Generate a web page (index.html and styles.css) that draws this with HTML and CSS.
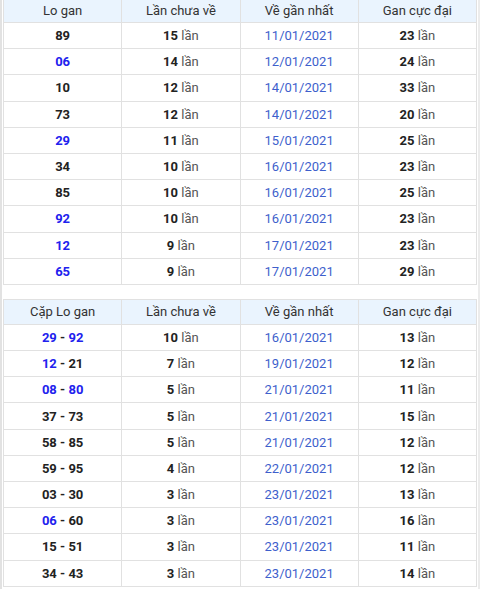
FILE: index.html
```html
<!DOCTYPE html>
<html lang="vi">
<head>
<meta charset="utf-8">
<link rel="stylesheet" href="styles.css">
</head>
<body>
<div class="frame">
  <table class="stat stat-first">
    <thead>
      <tr><th>Lo gan</th><th>Lần chưa về</th><th>Về gần nhất</th><th>Gan cực đại</th></tr>
    </thead>
    <tbody>
      <tr><td class="num">89</td><td><b>15</b> lần</td><td class="date">11/01/2021</td><td><b>23</b> lần</td></tr>
      <tr><td class="num blue">06</td><td><b>14</b> lần</td><td class="date">12/01/2021</td><td><b>24</b> lần</td></tr>
      <tr><td class="num">10</td><td><b>12</b> lần</td><td class="date">14/01/2021</td><td><b>33</b> lần</td></tr>
      <tr><td class="num">73</td><td><b>12</b> lần</td><td class="date">14/01/2021</td><td><b>20</b> lần</td></tr>
      <tr><td class="num blue">29</td><td><b>11</b> lần</td><td class="date">15/01/2021</td><td><b>25</b> lần</td></tr>
      <tr><td class="num">34</td><td><b>10</b> lần</td><td class="date">16/01/2021</td><td><b>23</b> lần</td></tr>
      <tr><td class="num">85</td><td><b>10</b> lần</td><td class="date">16/01/2021</td><td><b>25</b> lần</td></tr>
      <tr><td class="num blue">92</td><td><b>10</b> lần</td><td class="date">16/01/2021</td><td><b>23</b> lần</td></tr>
      <tr><td class="num blue">12</td><td><b>9</b> lần</td><td class="date">17/01/2021</td><td><b>23</b> lần</td></tr>
      <tr><td class="num blue">65</td><td><b>9</b> lần</td><td class="date">17/01/2021</td><td><b>29</b> lần</td></tr>
    </tbody>
  </table>
  <table class="stat">
    <thead>
      <tr><th>Cặp Lo gan</th><th>Lần chưa về</th><th>Về gần nhất</th><th>Gan cực đại</th></tr>
    </thead>
    <tbody>
      <tr><td class="num"><span class="blue">29</span> - <span class="blue">92</span></td><td><b>10</b> lần</td><td class="date">16/01/2021</td><td><b>13</b> lần</td></tr>
      <tr><td class="num"><span class="blue">12</span> - 21</td><td><b>7</b> lần</td><td class="date">19/01/2021</td><td><b>12</b> lần</td></tr>
      <tr><td class="num"><span class="blue">08</span> - <span class="blue">80</span></td><td><b>5</b> lần</td><td class="date">21/01/2021</td><td><b>11</b> lần</td></tr>
      <tr><td class="num">37 - 73</td><td><b>5</b> lần</td><td class="date">21/01/2021</td><td><b>15</b> lần</td></tr>
      <tr><td class="num">58 - 85</td><td><b>5</b> lần</td><td class="date">21/01/2021</td><td><b>12</b> lần</td></tr>
      <tr><td class="num">59 - 95</td><td><b>4</b> lần</td><td class="date">22/01/2021</td><td><b>12</b> lần</td></tr>
      <tr><td class="num">03 - 30</td><td><b>3</b> lần</td><td class="date">23/01/2021</td><td><b>13</b> lần</td></tr>
      <tr><td class="num"><span class="blue">06</span> - 60</td><td><b>3</b> lần</td><td class="date">23/01/2021</td><td><b>16</b> lần</td></tr>
      <tr><td class="num">15 - 51</td><td><b>3</b> lần</td><td class="date">23/01/2021</td><td><b>11</b> lần</td></tr>
      <tr><td class="num">34 - 43</td><td><b>3</b> lần</td><td class="date">23/01/2021</td><td><b>14</b> lần</td></tr>
    </tbody>
  </table>
</div>
</body>
</html>
```
FILE: styles.css
```css
html, body {
  margin: 0;
  padding: 0;
  background: #fff;
}
body {
  font-family: Roboto, "Liberation Sans", Arial, sans-serif;
  font-size: 13px;
  color: #555;
  overflow: hidden;
}
.frame {
  width: 474px;
  margin-top: -3px;
  border-left: 2px solid #e2e2e2;
  border-right: 2px solid #ececec;
  padding: 0 1px 0 1px;
  box-sizing: content-box;
  height: 600px;
}
.stat {
  width: 474px;
  border-collapse: collapse;
  table-layout: fixed;
  margin-bottom: 14px;
}
.stat th, .stat td {
  border: 1px solid #e1e1e1;
  text-align: center;
  padding: 0;
}
.stat th {
  background: #eaf4fe;
  font-weight: normal;
  color: #333;
  height: 24px;
}
.stat td {
  height: 25.2px;
}
.stat b {
  color: #222;
  font-weight: bold;
}
.num {
  font-weight: bold;
  color: #222;
}
.blue {
  color: #2121ee;
}
.date {
  color: #3e5fcc;
}
```
